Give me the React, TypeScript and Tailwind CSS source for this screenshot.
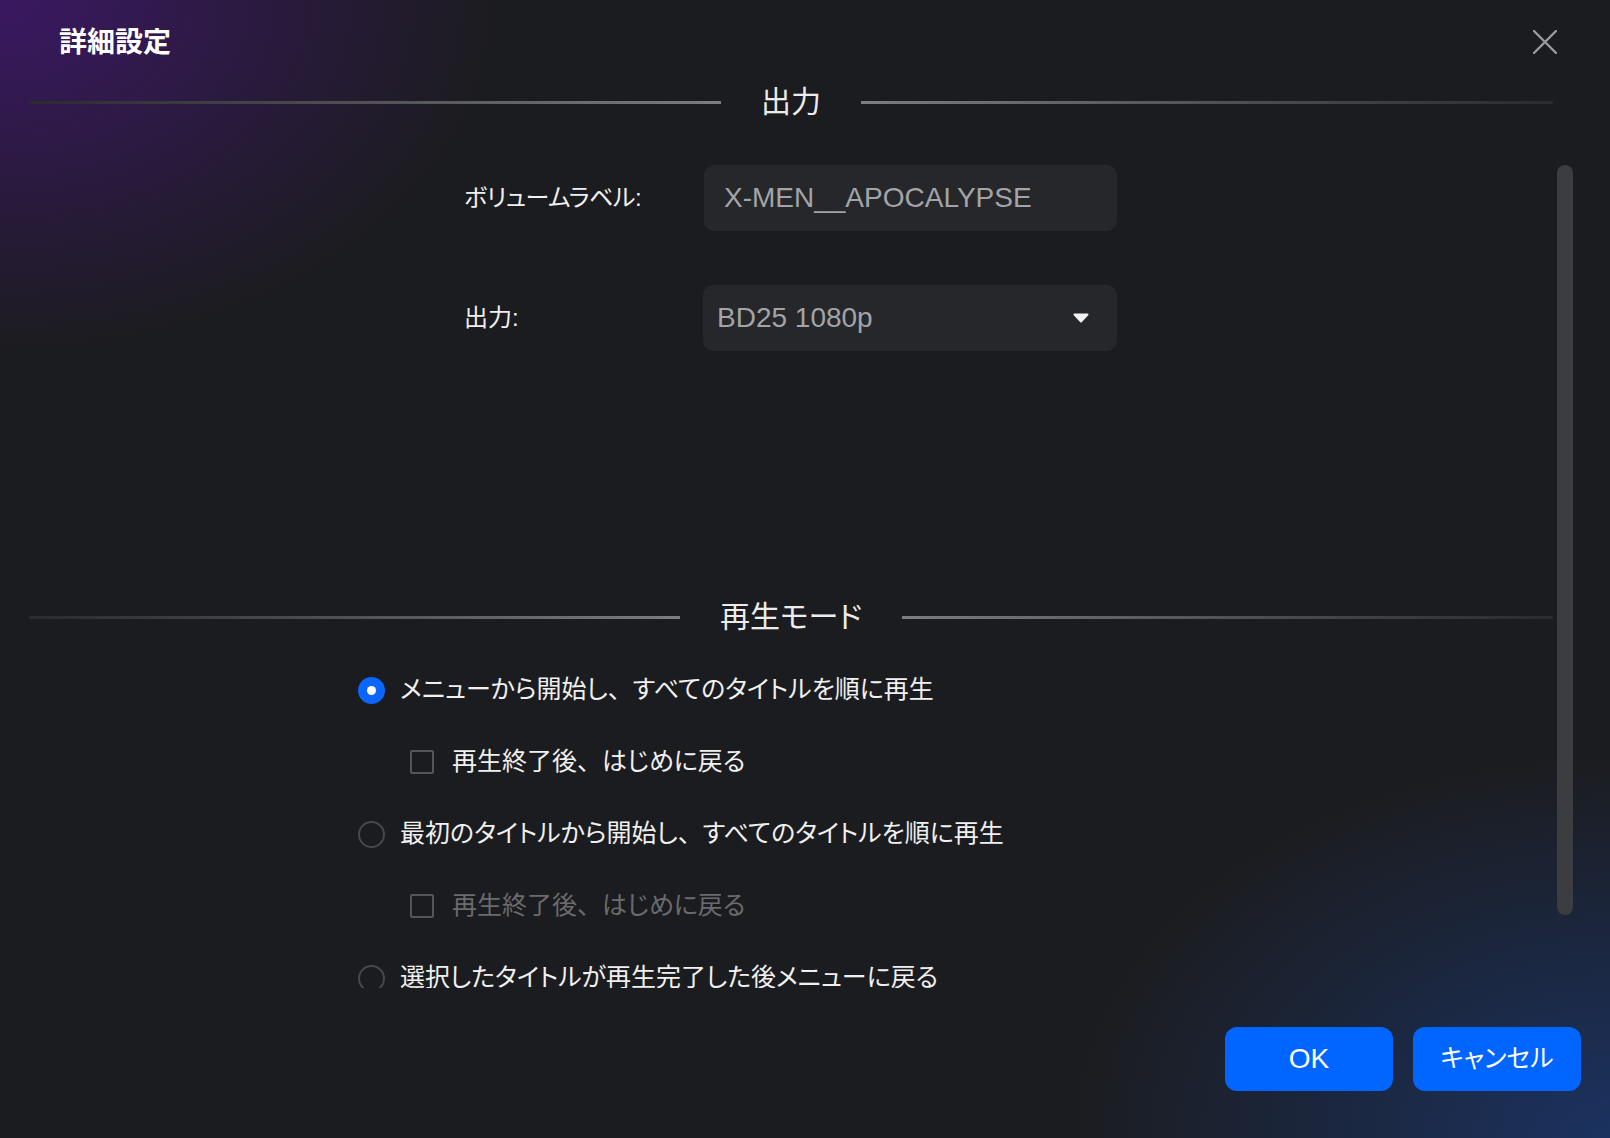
import { useState } from 'react'

// the ideographic comma keeps its full width while kana stay proportional
const JpText = ({ text }: { text: string }) => {
  const parts = text.split('、')
  return (
    <>
      {parts.map((p, i) => (
        <span key={i}>
          {p}
          {i < parts.length - 1 && <span className="[font-feature-settings:normal]">、</span>}
        </span>
      ))}
    </>
  )
}

const SectionHeading = ({ title }: { title: string }) => (
  <div className="flex items-center h-[36px]">
    <div className="flex-1 h-[3px] bg-gradient-to-r from-[#2a2b2e] to-[#7c7d80]" />
    <div className="mx-[40px] text-[30px] leading-none text-[#ececec]">{title}</div>
    <div className="flex-1 h-[3px] bg-gradient-to-r from-[#7c7d80] to-[#2a2b2e]" />
  </div>
)

const Radio = ({ checked, label, onClick }: { checked: boolean; label: string; onClick: () => void }) => (
  <div className="flex items-center h-[72px] pl-[329px] cursor-pointer" onClick={onClick}>
    {checked ? (
      <div className="w-[27px] h-[27px] rounded-full bg-[#0a66ff] flex items-center justify-center">
        <div className="w-[9px] h-[9px] rounded-full bg-white" />
      </div>
    ) : (
      <div className="w-[27px] h-[27px] rounded-full border-2 border-[#48494c]" />
    )}
    <span className="ml-[15px] text-[25px] text-[#f0f0f0]">
      <JpText text={label} />
    </span>
  </div>
)

const Checkbox = ({ label, disabled }: { label: string; disabled?: boolean }) => (
  <div className="flex items-center h-[72px] pl-[381px]">
    <div className="w-[24px] h-[24px] rounded-[2px] border-2 border-[#55565a]" />
    <span className={`ml-[18px] text-[25px] ${disabled ? 'text-[#6a6b6e]' : 'text-[#f0f0f0]'}`}>
      <JpText text={label} />
    </span>
  </div>
)

export default function App() {
  const [mode, setMode] = useState(0)

  return (
    <div
      className="w-[1610px] h-[1138px] overflow-hidden flex flex-col bg-[#1b1c1f] bg-[radial-gradient(ellipse_at_0%_0%,#3b1862_0%,rgba(27,28,31,0)_22%),radial-gradient(ellipse_at_100%_100%,#1b3260_0%,rgba(27,28,31,0)_24%)] [font-feature-settings:'palt'] select-none"
      style={{ fontFamily: '"Liberation Sans", "Noto Sans CJK JP", sans-serif' }}
    >
      {/* header */}
      <div className="h-[84px] flex items-center justify-between pl-[59px] pr-[53px] shrink-0">
        <div className="text-[28px] font-bold text-white pt-[2px]">詳細設定</div>
        <svg width="24" height="24" viewBox="0 0 24 24" className="text-[#9a9b9e]">
          <path d="M1 1L23 23M23 1L1 23" stroke="currentColor" strokeWidth="2.4" strokeLinecap="round" />
        </svg>
      </div>

      {/* body */}
      <div className="h-[904px] flex shrink-0">
        <div className="w-[1524px] ml-[29px] overflow-hidden">
          <SectionHeading title="出力" />

          <div className="flex items-center pl-[435px] mt-[45px]">
            <div className="w-[240px] text-[24px] tracking-[-0.5px] text-[#f0f0f0]">ボリュームラベル:</div>
            <div className="w-[413px] h-[66px] rounded-[10px] bg-[#26272a] flex items-center px-[20px] text-[28px] text-[#a3a4a7]">
              X-MEN__APOCALYPSE
            </div>
          </div>

          <div className="flex items-center pl-[435px] mt-[54px]">
            <div className="w-[239px] text-[24px] text-[#f0f0f0]">出力:</div>
            <div className="w-[414px] h-[66px] rounded-[10px] bg-[#26272a] flex items-center justify-between pl-[14px] pr-[28px] text-[28px] text-[#a3a4a7]">
              <span>BD25 1080p</span>
              <svg width="16" height="10" viewBox="0 0 16 10">
                <path d="M1.5 1.5H14.5L8 8.5Z" fill="#f2f2f2" stroke="#f2f2f2" strokeWidth="2" strokeLinejoin="round" />
              </svg>
            </div>
          </div>

          <div className="mt-[248px]">
            <SectionHeading title="再生モード" />
          </div>

          <div className="mt-[19px]">
            <Radio checked={mode === 0} onClick={() => setMode(0)} label="メニューから開始し、すべてのタイトルを順に再生" />
            <Checkbox label="再生終了後、はじめに戻る" disabled={mode !== 0} />
            <Radio checked={mode === 1} onClick={() => setMode(1)} label="最初のタイトルから開始し、すべてのタイトルを順に再生" />
            <Checkbox label="再生終了後、はじめに戻る" disabled={mode !== 1} />
            <Radio checked={mode === 2} onClick={() => setMode(2)} label="選択したタイトルが再生完了した後メニューに戻る" />
          </div>
        </div>

        {/* scrollbar */}
        <div className="w-[16px] ml-[4px] pt-[81px]">
          <div className="w-[16px] h-[750px] rounded-full bg-[#3c3d40]" />
        </div>
      </div>

      {/* footer */}
      <div className="flex justify-end gap-[20px] pr-[29px] pt-[39px]">
        <button className="w-[168px] h-[64px] rounded-[12px] bg-[#0066ff] text-white text-[28px]">OK</button>
        <button className="w-[168px] h-[64px] rounded-[12px] bg-[#0066ff] text-white text-[25px]">キャンセル</button>
      </div>
    </div>
  )
}
